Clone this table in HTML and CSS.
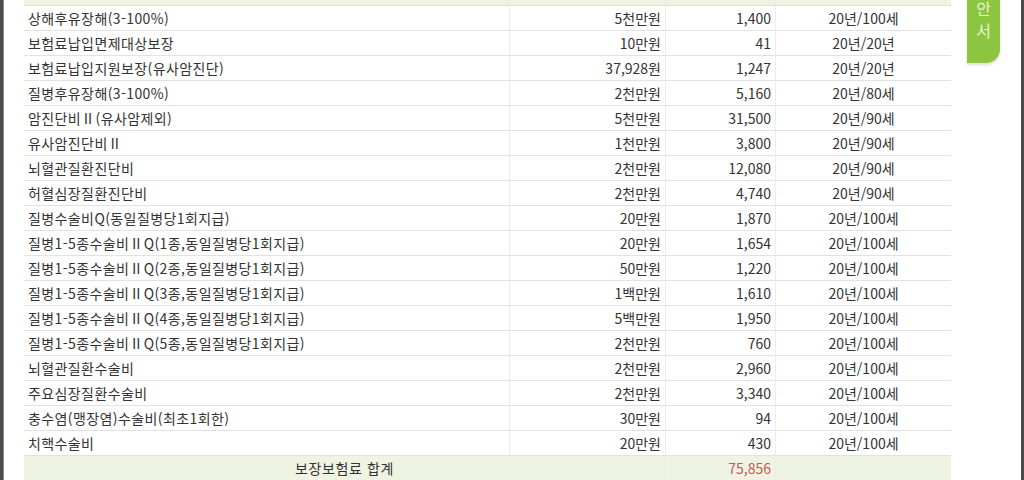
FILE: index.html
```html
<!DOCTYPE html>
<html lang="ko">
<head>
<meta charset="utf-8">
<title>보장내역</title>
<link rel="stylesheet" href="styles.css">
</head>
<body>
<div class="page">
  <div class="edge-left"></div>
  <div class="main">
    <table class="cov">
      <colgroup>
        <col class="c-name"><col class="c-amt"><col class="c-prem"><col class="c-term">
      </colgroup>
      <thead>
        <tr class="head"><th></th><th></th><th></th><th></th></tr>
      </thead>
      <tbody>
        <tr><td class="name">상해후유장해(3-100%)</td><td class="num">5천만원</td><td class="num">1,400</td><td class="term">20년/100세</td></tr>
        <tr><td class="name">보험료납입면제대상보장</td><td class="num">10만원</td><td class="num">41</td><td class="term">20년/20년</td></tr>
        <tr><td class="name">보험료납입지원보장(유사암진단)</td><td class="num">37,928원</td><td class="num">1,247</td><td class="term">20년/20년</td></tr>
        <tr><td class="name">질병후유장해(3-100%)</td><td class="num">2천만원</td><td class="num">5,160</td><td class="term">20년/80세</td></tr>
        <tr><td class="name">암진단비Ⅱ(유사암제외)</td><td class="num">5천만원</td><td class="num">31,500</td><td class="term">20년/90세</td></tr>
        <tr><td class="name">유사암진단비Ⅱ</td><td class="num">1천만원</td><td class="num">3,800</td><td class="term">20년/90세</td></tr>
        <tr><td class="name">뇌혈관질환진단비</td><td class="num">2천만원</td><td class="num">12,080</td><td class="term">20년/90세</td></tr>
        <tr><td class="name">허혈심장질환진단비</td><td class="num">2천만원</td><td class="num">4,740</td><td class="term">20년/90세</td></tr>
        <tr><td class="name">질병수술비Q(동일질병당1회지급)</td><td class="num">20만원</td><td class="num">1,870</td><td class="term">20년/100세</td></tr>
        <tr><td class="name">질병1-5종수술비ⅡQ(1종,동일질병당1회지급)</td><td class="num">20만원</td><td class="num">1,654</td><td class="term">20년/100세</td></tr>
        <tr><td class="name">질병1-5종수술비ⅡQ(2종,동일질병당1회지급)</td><td class="num">50만원</td><td class="num">1,220</td><td class="term">20년/100세</td></tr>
        <tr><td class="name">질병1-5종수술비ⅡQ(3종,동일질병당1회지급)</td><td class="num">1백만원</td><td class="num">1,610</td><td class="term">20년/100세</td></tr>
        <tr><td class="name">질병1-5종수술비ⅡQ(4종,동일질병당1회지급)</td><td class="num">5백만원</td><td class="num">1,950</td><td class="term">20년/100세</td></tr>
        <tr><td class="name">질병1-5종수술비ⅡQ(5종,동일질병당1회지급)</td><td class="num">2천만원</td><td class="num">760</td><td class="term">20년/100세</td></tr>
        <tr><td class="name">뇌혈관질환수술비</td><td class="num">2천만원</td><td class="num">2,960</td><td class="term">20년/100세</td></tr>
        <tr><td class="name">주요심장질환수술비</td><td class="num">2천만원</td><td class="num">3,340</td><td class="term">20년/100세</td></tr>
        <tr><td class="name">충수염(맹장염)수술비(최초1회한)</td><td class="num">30만원</td><td class="num">94</td><td class="term">20년/100세</td></tr>
        <tr><td class="name">치핵수술비</td><td class="num">20만원</td><td class="num">430</td><td class="term">20년/100세</td></tr>
      </tbody>
      <tfoot>
        <tr class="total"><td class="label" colspan="2">보장보험료 합계</td><td class="num sum">75,856</td><td class="term"></td></tr>
      </tfoot>
    </table>
  </div>
  <div class="tab"><span>안</span><span>서</span></div>
  <div class="spacer"></div>
  <div class="edge-right"></div>
</div>
</body>
</html>
```

FILE: styles.css
```css
html, body {
  margin: 0;
  padding: 0;
  background: #ffffff;
}

body {
  font-family: "Noto Sans CJK KR", "Noto Sans", sans-serif;
  color: #333333;
}

.page {
  display: flex;
  align-items: flex-start;
  width: 1024px;
  height: 480px;
  overflow: hidden;
}

.edge-left {
  width: 3px;
  height: 480px;
  background: #4b4b4b;
  border-right: 1px solid #8a8a8a;
  flex: none;
}

.main {
  padding-left: 20px;
  flex: none;
}

.cov {
  width: 927px;
  border-collapse: separate;
  border-spacing: 0;
  table-layout: fixed;
  font-size: 14px;
  line-height: 24px;
}

.c-name { width: 485px; }
.c-amt { width: 156px; }
.c-prem { width: 110px; }
.c-term { width: 176px; }

.cov th,
.cov td {
  padding: 0 4px;
  border-bottom: 1px solid #e2e2e2;
  white-space: nowrap;
  font-weight: normal;
}

.cov th + th,
.cov td + td {
  border-left: 1px solid #ececec;
}

.head th {
  height: 5px;
  line-height: 5px;
  background: #eff3e2;
  border-bottom: 1px solid #dcdfd2;
}

.cov tbody td {
  height: 24px;
}

.name {
  text-align: left;
  letter-spacing: 0.4px;
}
.num { text-align: right; }
.term { text-align: center; }

.total td {
  height: 24px;
  background: #eff3e2;
  border-bottom: none;
}

.total .label {
  text-align: center;
  letter-spacing: 0.6px;
}

.sum {
  color: #c65a55;
  font-weight: bold;
}

.tab {
  flex: none;
  margin-left: 16px;
  margin-top: -3px;
  width: 33px;
  height: 66px;
  background: #8cc53f;
  border-bottom-right-radius: 14px;
  box-shadow: 0 2px 3px rgba(120, 140, 90, 0.25);
  display: flex;
  flex-direction: column;
  align-items: center;
  color: #e8f5d6;
  font-size: 16px;
  line-height: 22px;
}

.spacer {
  flex: 1;
}

.edge-right {
  flex: none;
  width: 3px;
  height: 480px;
  background: #4b4b4b;
}
```
